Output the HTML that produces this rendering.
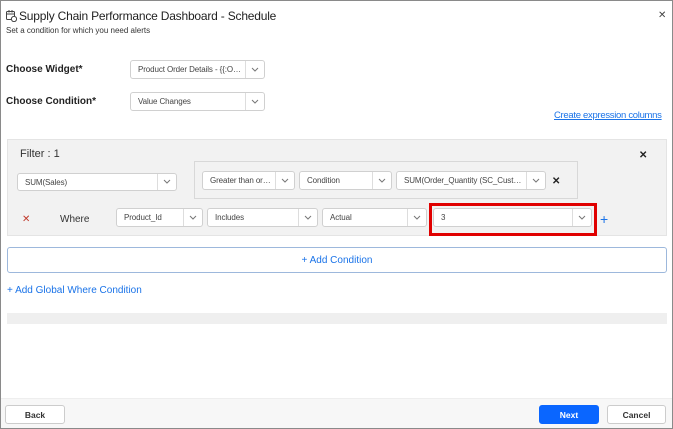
<!DOCTYPE html>
<html><head><meta charset="utf-8"><style>
*{box-sizing:border-box;margin:0;padding:0}
body{width:673px;height:429px;overflow:hidden;background:#fff;font-family:"Liberation Sans",sans-serif;position:relative;color:#222}
.frame{position:absolute;left:0;top:0;width:673px;height:429px;border:1px solid #8a8a8a}
.a{position:absolute;white-space:nowrap}
.dd{position:absolute;background:#fff;border:1px solid #d0d0d0;border-radius:3px;font-size:8px;color:#444;padding-left:7px;padding-right:22px;line-height:17px;overflow:hidden;white-space:nowrap;text-overflow:ellipsis;letter-spacing:-0.1px}
.dd::after{content:"";position:absolute;right:0;top:0;bottom:0;width:18px;border-left:1px solid #ddd}
.dd svg{position:absolute;right:5px;top:50%;margin-top:-3px}
.btn{position:absolute;border:1px solid #ccc;border-radius:3px;background:#fff;font-size:8.5px;display:flex;align-items:center;justify-content:center;font-weight:bold;color:#333}
</style></head><body>
<div class="frame"></div>
<svg class="a" style="left:6px;top:10px" width="11" height="12" viewBox="0 0 11 12"><rect x="0.5" y="1.5" width="8" height="8" rx="1" fill="none" stroke="#444"/><line x1="0.5" y1="4" x2="8.5" y2="4" stroke="#444"/><line x1="3" y1="0" x2="3" y2="2.5" stroke="#444"/><line x1="6" y1="0" x2="6" y2="2.5" stroke="#444"/><circle cx="8" cy="9" r="2.6" fill="#fff" stroke="#444"/></svg>
<div class="a" style="left:19px;top:9px;font-size:12px;color:#222;letter-spacing:-0.2px">Supply Chain Performance Dashboard - Schedule</div>
<div class="a" style="left:6px;top:26px;font-size:8px;color:#333">Set a condition for which you need alerts</div>
<div class="a" style="left:6px;top:64px;font-size:10px;font-weight:bold">Choose Widget*</div>
<div class="a" style="left:6px;top:96px;font-size:10px;font-weight:bold">Choose Condition*</div>
<div class="a" style="left:658px;top:10px;font-size:10px;color:#444">✕</div>

<div class="dd" style="left:130px;top:60px;width:135px;height:19px">Product Order Details - {{:Ord...<svg width="8" height="6"><path d="M1 1L4 4L7 1" fill="none" stroke="#777"/></svg></div>
<div class="dd" style="left:130px;top:92px;width:135px;height:19px">Value Changes<svg width="8" height="6"><path d="M1 1L4 4L7 1" fill="none" stroke="#777"/></svg></div>
<div class="a" style="left:554px;top:110px;font-size:9.5px;color:#1a73e8;text-decoration:underline;letter-spacing:-0.3px">Create expression columns</div>

<div class="a" style="left:7px;top:139px;width:660px;height:97px;background:#f2f2f2;border:1px solid #e4e4e4"></div>
<div class="a" style="left:20px;top:148px;font-size:11px;color:#333">Filter : 1</div>
<div class="a" style="left:639px;top:150px;font-size:10px;color:#222;font-weight:bold">✕</div>
<div class="dd" style="left:17px;top:173px;width:160px;height:18px">SUM(Sales)<svg width="8" height="6"><path d="M1 1L4 4L7 1" fill="none" stroke="#777"/></svg></div>
<div class="a" style="left:194px;top:161px;width:384px;height:38px;border:1px solid #d8d8d8;background:#f2f2f2"></div>
<div class="dd" style="left:202px;top:171px;width:93px;height:19px">Greater than or E...<svg width="8" height="6"><path d="M1 1L4 4L7 1" fill="none" stroke="#777"/></svg></div>
<div class="dd" style="left:299px;top:171px;width:93px;height:19px">Condition<svg width="8" height="6"><path d="M1 1L4 4L7 1" fill="none" stroke="#777"/></svg></div>
<div class="dd" style="left:396px;top:171px;width:150px;height:19px">SUM(Order_Quantity (SC_Custom...<svg width="8" height="6"><path d="M1 1L4 4L7 1" fill="none" stroke="#777"/></svg></div>
<div class="a" style="left:552px;top:176px;font-size:10px;font-weight:bold">✕</div>

<div class="a" style="left:22px;top:214px;font-size:10px;color:#c0392b">✕</div>
<div class="a" style="left:60px;top:214px;font-size:10px;color:#333">Where</div>
<div class="dd" style="left:116px;top:208px;width:87px;height:19px">Product_Id<svg width="8" height="6"><path d="M1 1L4 4L7 1" fill="none" stroke="#777"/></svg></div>
<div class="dd" style="left:207px;top:208px;width:111px;height:19px">Includes<svg width="8" height="6"><path d="M1 1L4 4L7 1" fill="none" stroke="#777"/></svg></div>
<div class="dd" style="left:322px;top:208px;width:105px;height:19px">Actual<svg width="8" height="6"><path d="M1 1L4 4L7 1" fill="none" stroke="#777"/></svg></div>
<div class="dd" style="left:433px;top:208px;width:159px;height:19px">3<svg width="8" height="6"><path d="M1 1L4 4L7 1" fill="none" stroke="#777"/></svg></div>
<div class="a" style="left:429px;top:203px;width:168px;height:33px;border:3px solid #e00000"></div>
<div class="a" style="left:600px;top:211px;font-size:14px;color:#1a73e8">+</div>

<div class="a" style="left:7px;top:247px;width:660px;height:26px;border:1px solid #9db8dc;border-radius:3px;display:flex;align-items:center;justify-content:center;font-size:10px;color:#1a73e8">+ Add Condition</div>
<div class="a" style="left:7px;top:285px;font-size:10px;color:#1a73e8">+ Add Global Where Condition</div>
<div class="a" style="left:7px;top:313px;width:660px;height:11px;background:#efefef"></div>

<div class="a" style="left:1px;top:398px;width:671px;height:30px;background:#f7f7f7;border-top:1px solid #eee"></div>
<div class="btn" style="left:5px;top:405px;width:60px;height:19px">Back</div>
<div class="btn" style="left:539px;top:405px;width:60px;height:19px;background:#0a66ff;border-color:#0a66ff;color:#fff">Next</div>
<div class="btn" style="left:607px;top:405px;width:59px;height:19px">Cancel</div>
</body></html>
